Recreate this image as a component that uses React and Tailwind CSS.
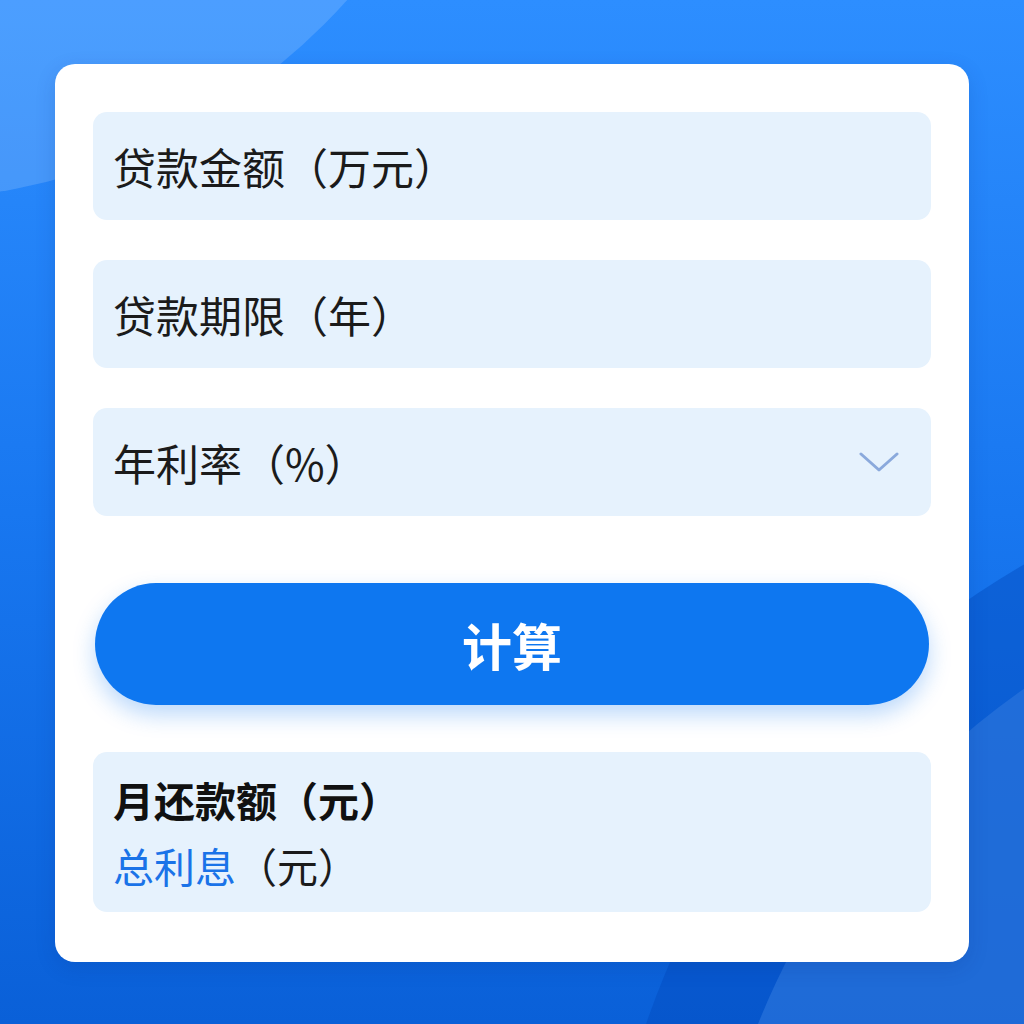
const fields = [
  { label: "贷款金额（万元）" },
  { label: "贷款期限（年）" },
  { label: "年利率（%）", select: true },
];

function Field({ label, select }) {
  return (
    <div className="h-[108px] rounded-[14px] bg-[#e6f2fd] pl-5 pr-8 flex items-center justify-between">
      <span className="text-[43px] leading-none text-[#1b1b1b]">{label}</span>
      {select && (
        <svg width="40" height="22" viewBox="0 0 40 22" fill="none">
          <path d="M2 3 L20 19 L38 3" stroke="#8aa9dc" strokeWidth="3" strokeLinecap="round" strokeLinejoin="round" />
        </svg>
      )}
    </div>
  );
}

export default function App() {
  return (
    <div
      className="relative min-h-screen overflow-hidden bg-gradient-to-b from-[#2d8eff] via-[#1877f0] to-[#0a60d8] px-[55px] pt-[64px] pb-[62px]"
      style={{ fontFamily: '"Noto Sans CJK SC", "Noto Sans", sans-serif' }}
    >
      {/* background shapes */}
      <div className="absolute -left-[700px] -top-[1000px] h-[1200px] w-[1200px] rounded-full bg-white/15" />
      <div className="absolute left-[600px] top-[450px] h-[1700px] w-[1700px] rounded-full bg-[#034bbf]/45" />
      <div className="absolute left-[705px] top-[555px] h-[1490px] w-[1490px] rounded-full bg-[#2a74dc]/70" />

      <div className="relative rounded-[20px] bg-white px-[38px] pt-[48px] pb-[50px] shadow-[0_6px_20px_rgba(0,40,120,0.15)]">
        <div className="flex flex-col gap-10">
          {fields.map((f) => (
            <Field key={f.label} {...f} />
          ))}
        </div>

        <button className="mt-[67px] ml-[2px] flex h-[122px] w-[834px] items-center justify-center rounded-full bg-[#0e77f0] text-[50px] font-bold text-white shadow-[0_10px_22px_rgba(14,119,240,0.28)]">
          计算
        </button>

        <div className="mt-[47px] rounded-[14px] bg-[#e6f2fd] px-5 py-[14px]">
          <div className="text-[41px] leading-[66px] font-bold text-[#111]">月还款额（元）</div>
          <div className="text-[41px] leading-[66px] text-[#1b1b1b]">
            <span className="text-[#1a73e8]">总利息</span>（元）
          </div>
        </div>
      </div>
    </div>
  );
}
